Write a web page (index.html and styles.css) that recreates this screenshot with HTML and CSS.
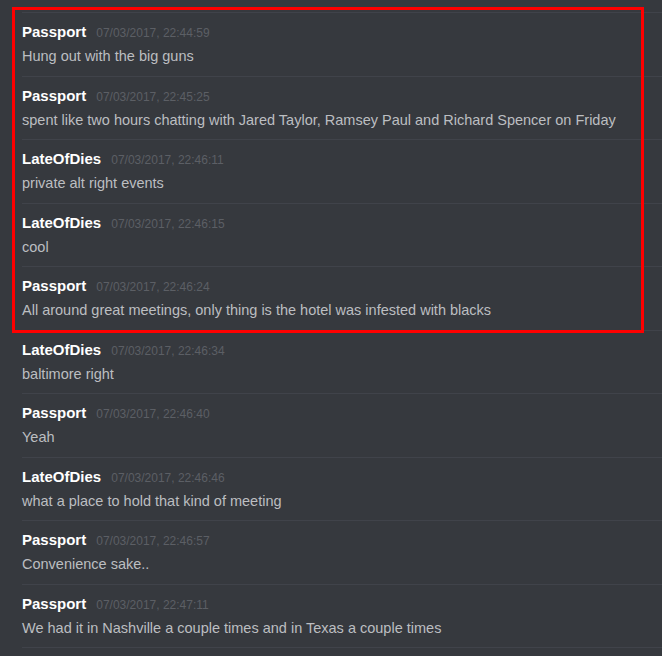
FILE: index.html
```html
<!DOCTYPE html>
<html lang="en">
<head>
    <meta charset="UTF-8">
    <meta name="viewport" content="width=device-width, initial-scale=1.0">
    <title>Chat Log</title>
    <link rel="stylesheet" href="styles.css">
</head>
<body>
    <div class="chat">
        <div class="messages">
            <div class="message">
                <div class="header"><span class="user">Passport</span><span class="time">07/03/2017, 22:44:59</span></div>
                <div class="content">Hung out with the big guns</div>
            </div>
            <div class="message">
                <div class="header"><span class="user">Passport</span><span class="time">07/03/2017, 22:45:25</span></div>
                <div class="content">spent like two hours chatting with Jared Taylor, Ramsey Paul and Richard Spencer on Friday</div>
            </div>
            <div class="message">
                <div class="header"><span class="user">LateOfDies</span><span class="time">07/03/2017, 22:46:11</span></div>
                <div class="content">private alt right events</div>
            </div>
            <div class="message">
                <div class="header"><span class="user">LateOfDies</span><span class="time">07/03/2017, 22:46:15</span></div>
                <div class="content">cool</div>
            </div>
            <div class="message">
                <div class="header"><span class="user">Passport</span><span class="time">07/03/2017, 22:46:24</span></div>
                <div class="content">All around great meetings, only thing is the hotel was infested with blacks</div>
            </div>
            <div class="message">
                <div class="header"><span class="user">LateOfDies</span><span class="time">07/03/2017, 22:46:34</span></div>
                <div class="content">baltimore right</div>
            </div>
            <div class="message">
                <div class="header"><span class="user">Passport</span><span class="time">07/03/2017, 22:46:40</span></div>
                <div class="content">Yeah</div>
            </div>
            <div class="message">
                <div class="header"><span class="user">LateOfDies</span><span class="time">07/03/2017, 22:46:46</span></div>
                <div class="content">what a place to hold that kind of meeting</div>
            </div>
            <div class="message">
                <div class="header"><span class="user">Passport</span><span class="time">07/03/2017, 22:46:57</span></div>
                <div class="content">Convenience sake..</div>
            </div>
            <div class="message">
                <div class="header"><span class="user">Passport</span><span class="time">07/03/2017, 22:47:11</span></div>
                <div class="content">We had it in Nashville a couple times and in Texas a couple times</div>
            </div>
            <div class="message"></div>
        </div>
        <!-- highlight box drawn over the first five messages -->
        <div class="highlight"></div>
    </div>
</body>
</html>
```

FILE: styles.css
```css
* {
    margin: 0;
    padding: 0;
    box-sizing: border-box;
}

body {
    font-family: 'Liberation Sans', Arial, sans-serif;
    background: #36393e;
    color: #fff;
    height: 100vh;
    overflow: hidden;
}

.chat {
    position: relative;
    padding-top: 12px;
}

.messages {
    margin-left: 22px;
}

.message {
    border-top: 1px solid #40434a;
    padding: 9px 0 9.5px;
}

.header {
    font-size: 15px;
    line-height: 20px;
    height: 20px;
}

.user {
    font-weight: bold;
    color: #fff;
}

.time {
    font-size: 12px;
    line-height: 12px;
    color: #5c5f65;
    margin-left: 10px;
}

.content {
    font-size: 14.5px;
    line-height: 20px;
    margin-top: 4px;
    color: #bcbec1;
}

.highlight {
    position: absolute;
    left: 12px;
    top: 7px;
    width: 632px;
    height: 326px;
    border: 3px solid #ff0000;
}
```
